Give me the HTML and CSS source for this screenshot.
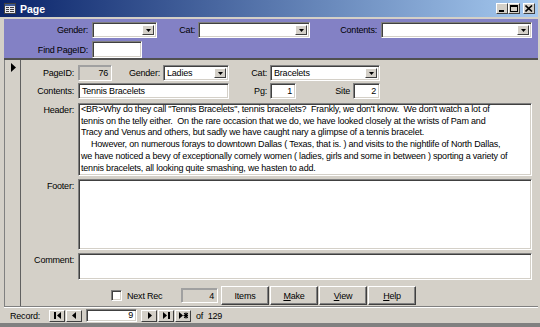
FILE: index.html
```html
<!DOCTYPE html>
<html lang="en">
  <head>
    <meta charset="UTF-8" />
    <title>Page</title>
    <link rel="stylesheet" href="styles.css">
  </head>
  <body>
    <div class="window">
      <!-- caption -->
      <div class="titlebar">
        <svg class="title-icon" width="12" height="11" viewBox="0 0 12 11">
          <rect x="0.5" y="0.5" width="11" height="10" fill="#e8e8f0" stroke="#404040"/>
          <rect x="1" y="1" width="10" height="2" fill="#3a5a9a"/>
          <rect x="2" y="4" width="3" height="1" fill="#404040"/>
          <rect x="6" y="4" width="4" height="1" fill="#404040"/>
          <rect x="2" y="6" width="3" height="1" fill="#404040"/>
          <rect x="6" y="6" width="4" height="1" fill="#404040"/>
          <rect x="2" y="8" width="3" height="1" fill="#404040"/>
          <rect x="6" y="8" width="4" height="1" fill="#404040"/>
        </svg>
        <span class="title-text">Page</span>
        <div class="caption-buttons">
          <span class="cap-btn">
            <svg width="8" height="7" viewBox="0 0 8 7"><rect x="1" y="5" width="5" height="2" fill="#000"/></svg>
          </span>
          <span class="cap-btn">
            <svg width="8" height="7" viewBox="0 0 8 7"><rect x="0.5" y="0.5" width="7" height="6" fill="none" stroke="#000"/><rect x="0" y="0" width="8" height="2" fill="#000"/></svg>
          </span>
          <span class="cap-btn cap-close">
            <svg width="8" height="7" viewBox="0 0 8 7"><path d="M0.5 0.5 L7 6.5 M7 0.5 L0.5 6.5" stroke="#000" stroke-width="1.6"/></svg>
          </span>
        </div>
      </div>

      <div class="form">
        <!-- form header: search controls -->
        <div class="form-header">
          <div class="row">
            <span class="lbl hl-gender">Gender:</span>
            <div class="combo hc-gender"><span class="combo-text"></span><span class="drop"><svg width="5" height="3" viewBox="0 0 5 3"><polygon points="0,0 5,0 2.5,3" fill="#000"/></svg></span></div>
            <span class="lbl hl-cat">Cat:</span>
            <div class="combo hc-cat"><span class="combo-text"></span><span class="drop"><svg width="5" height="3" viewBox="0 0 5 3"><polygon points="0,0 5,0 2.5,3" fill="#000"/></svg></span></div>
            <span class="lbl hl-contents">Contents:</span>
            <div class="combo hc-contents"><span class="combo-text"></span><span class="drop"><svg width="5" height="3" viewBox="0 0 5 3"><polygon points="0,0 5,0 2.5,3" fill="#000"/></svg></span></div>
          </div>
          <div class="row row-find">
            <span class="lbl hl-gender">Find PageID:</span>
            <div class="field hc-find"></div>
          </div>
        </div>

        <!-- detail section -->
        <div class="detail">
          <div class="selector">
            <svg class="current" width="5" height="9" viewBox="0 0 5 9"><polygon points="0,0 5,4.5 0,9" fill="#000"/></svg>
          </div>
          <div class="detail-body">
            <div class="row">
              <span class="lbl dl-first">PageID:</span>
              <div class="field field-locked dc-id">76</div>
              <span class="lbl dl-gender">Gender:</span>
              <div class="combo dc-gender"><span class="combo-text">Ladies</span><span class="drop"><svg width="5" height="3" viewBox="0 0 5 3"><polygon points="0,0 5,0 2.5,3" fill="#000"/></svg></span></div>
              <span class="lbl dl-cat">Cat:</span>
              <div class="combo dc-cat"><span class="combo-text">Bracelets</span><span class="drop"><svg width="5" height="3" viewBox="0 0 5 3"><polygon points="0,0 5,0 2.5,3" fill="#000"/></svg></span></div>
            </div>
            <div class="row row-2">
              <span class="lbl dl-first">Contents:</span>
              <div class="field dc-contents">Tennis Bracelets</div>
              <span class="lbl dl-cat">Pg:</span>
              <div class="field field-num dc-pg">1</div>
              <span class="lbl dl-site">Site</span>
              <div class="field field-num dc-site">2</div>
            </div>
            <div class="row row-memo row-header">
              <span class="lbl lbl-top dl-first">Header:</span>
              <div class="memo memo-header">
                <div class="memo-text">
                  <div>&lt;BR&gt;Why do they call "Tennis Bracelets", tennis bracelets?&nbsp; Frankly, we don't know.&nbsp; We don't watch a lot of</div>
                  <div>tennis on the telly either.&nbsp; On the rare occasion that we do, we have looked closely at the wrists of Pam and</div>
                  <div>Tracy and Venus and others, but sadly we have caught nary a glimpse of a tennis bracelet.</div>
                  <div class="indent">However, on numerous forays to downtown Dallas ( Texas, that is. ) and visits to the nightlife of North Dallas,</div>
                  <div>we have noticed a bevy of exceptionally comely women ( ladies, girls and some in between ) sporting a variety of</div>
                  <div>tennis bracelets, all looking quite smashing, we hasten to add.</div>
                  <div class="indent">After fortifying ourselves with a bit of liquid courage, we were emboldened to ask a few of them, since they</div>
                </div>
              </div>
            </div>
            <div class="row row-memo row-footer">
              <span class="lbl lbl-top dl-first">Footer:</span>
              <div class="memo memo-footer"></div>
            </div>
            <div class="row row-memo row-comment">
              <span class="lbl lbl-top dl-first">Comment:</span>
              <div class="memo memo-comment"></div>
            </div>
            <div class="row row-actions">
              <span class="checkbox"></span>
              <span class="check-label">Next Rec</span>
              <div class="field field-locked field-num dc-count">4</div>
              <button class="btn btn-items">Items</button>
              <button class="btn"><u>M</u>ake</button>
              <button class="btn"><u>V</u>iew</button>
              <button class="btn"><u>H</u>elp</button>
            </div>
          </div>
        </div>

        <!-- record navigation -->
        <div class="statusbar">
          <span class="rec-label">Record:</span>
          <span class="nav-btn nav-first"><svg width="7" height="7" viewBox="0 0 7 7"><rect x="0" y="0" width="2" height="7" fill="#000"/><polygon points="7,0 3,3.5 7,7" fill="#000"/></svg></span>
          <span class="nav-btn"><svg width="5" height="7" viewBox="0 0 5 7"><polygon points="4,0 0,3.5 4,7" fill="#000"/></svg></span>
          <div class="field field-num rec-input">9</div>
          <span class="nav-btn nav-next"><svg width="5" height="7" viewBox="0 0 5 7"><polygon points="1,0 5,3.5 1,7" fill="#000"/></svg></span>
          <span class="nav-btn"><svg width="7" height="7" viewBox="0 0 7 7"><polygon points="0,0 4,3.5 0,7" fill="#000"/><rect x="5" y="0" width="2" height="7" fill="#000"/></svg></span>
          <span class="nav-btn"><svg width="9" height="7" viewBox="0 0 9 7"><polygon points="0,0 4,3.5 0,7" fill="#000"/><path d="M7 0.5 V6.5 M4.5 3.5 H9 M5.2 1.2 L8.8 5.8 M8.8 1.2 L5.2 5.8" stroke="#000" stroke-width="1.1"/></svg></span>
          <span class="rec-of">of&nbsp; 129</span>
        </div>
      </div>
    </div>
  </body>
</html>
```

FILE: styles.css
```css
body {
  margin: 0;
  font-family: "Liberation Sans", Arial, sans-serif;
  font-size: 9px;
  letter-spacing: -0.2px;
  color: #000;
}

* {
  box-sizing: border-box;
}

.window {
  width: 540px;
  height: 327px;
  background-color: #d4d0c8;
  display: flex;
  flex-direction: column;
  border-bottom: 4px solid #808080;
  overflow: hidden;
}

/* caption */
.titlebar {
  height: 17px;
  margin-right: 2px;
  display: flex;
  align-items: center;
  background: linear-gradient(to right, #0a246a, #a6caf0);
  color: #fff;
}

.title-icon {
  margin-left: 4px;
}

.title-text {
  margin-left: 4px;
  font-weight: bold;
  font-size: 10.5px;
  letter-spacing: 0;
}

.caption-buttons {
  margin-left: auto;
  margin-right: 3px;
  display: flex;
}

.cap-btn {
  width: 12px;
  height: 11px;
  display: flex;
  align-items: center;
  justify-content: center;
  background-color: #d4d0c8;
  border: 1px solid;
  border-color: #fff #404040 #404040 #fff;
}

.cap-close {
  margin-left: 3px;
}

/* common controls */
.row {
  display: flex;
  align-items: center;
}

.lbl {
  flex: none;
  text-align: right;
  padding-right: 3px;
  white-space: nowrap;
}

.lbl-top {
  align-self: flex-start;
  padding-top: 2px;
}

.field,
.combo,
.memo,
.checkbox {
  flex: none;
  background-color: #fff;
  border: 1px solid;
  border-color: #808080 #fff #fff #808080;
  box-shadow: inset 1px 1px #404040, inset -1px -1px #d4d0c8;
}

.field {
  height: 16px;
  padding: 1px 3px 0 3px;
  line-height: 13px;
  white-space: nowrap;
  overflow: hidden;
}

.field-num {
  text-align: right;
}

.field-locked {
  background-color: #d4d0c8;
  box-shadow: inset 1px 1px #a0a0a0;
  border-color: #a0a0a0 #fff #fff #a0a0a0;
  text-align: right;
}

.combo {
  height: 16px;
  display: flex;
  align-items: stretch;
  padding: 2px;
}

.combo-text {
  flex: 1;
  padding-left: 1px;
  line-height: 11px;
  white-space: nowrap;
}

.drop {
  width: 12px;
  display: flex;
  align-items: center;
  justify-content: center;
  background-color: #d4d0c8;
  border: 1px solid;
  border-color: #fff #404040 #404040 #fff;
}

/* form header */
.form {
  flex: 1;
  margin: 2px 2px 0 4px;
  display: flex;
  flex-direction: column;
}

.form-header {
  height: 41px;
  padding-top: 3px;
  background-color: #8381c5;
  border-bottom: 2px solid #505050;
}

.row-find {
  margin-top: 3px;
}

.hl-gender {
  width: 88px;
  padding-right: 4px;
}

.hc-gender {
  width: 65px;
}

.hl-cat {
  width: 41px;
}

.hc-cat {
  width: 112px;
}

.hl-contents {
  width: 71px;
  padding-right: 4px;
}

.hc-contents {
  width: 151px;
}

.hc-find {
  width: 50px;
  height: 17px;
}

/* detail section */
.detail {
  flex: 1;
  display: flex;
  border-bottom: 1px solid #808080;
}

.selector {
  width: 17px;
  flex: none;
  border-left: 1px solid #808080;
  border-right: 1px solid #606060;
  padding: 3px 0 0 6px;
}

.detail-body {
  flex: 1;
  padding-top: 5px;
}

.dl-first {
  width: 57px;
  padding-right: 4px;
}

.dl-gender {
  width: 51px;
}

.dl-cat {
  width: 41px;
}

.dl-site {
  width: 57px;
}

.dc-id {
  width: 34px;
}

.dc-gender {
  width: 66px;
}

.dc-cat {
  width: 110px;
}

.dc-contents {
  width: 151px;
}

.dc-pg {
  width: 26px;
}

.dc-site {
  width: 27px;
}

.row-2 {
  margin-top: 2px;
}

.memo {
  width: 454px;
  overflow: hidden;
  padding: 0 2px;
  line-height: 11.7px;
  white-space: nowrap;
}

.indent {
  padding-left: 10px;
}

.row-header {
  margin-top: 4px;
}

.memo-header {
  height: 73px;
}

.row-footer {
  margin-top: 3px;
}

.memo-footer {
  height: 71px;
}

.row-comment {
  margin-top: 3px;
}

.memo-comment {
  height: 27px;
}

.row-actions {
  margin-top: 6px;
  height: 19px;
}

.checkbox {
  width: 11px;
  height: 11px;
  margin-left: 90px;
}

.check-label {
  width: 59px;
  padding-left: 5px;
}

.dc-count {
  width: 37px;
  height: 15px;
}

.btn {
  width: 48px;
  height: 19px;
  margin: 0 0 0 1px;
  padding: 0;
  font: inherit;
  letter-spacing: inherit;
  color: #000;
  background-color: #d4d0c8;
  border: 1px solid;
  border-color: #fff #404040 #404040 #fff;
  box-shadow: inset -1px -1px #808080;
}

.btn-items {
  margin-left: 3px;
}

/* record navigation */
.statusbar {
  height: 16px;
  display: flex;
  align-items: center;
  padding-left: 6px;
  border-top: 1px solid #fff;
}

.rec-label {
  width: 39px;
}

.nav-btn {
  width: 16px;
  height: 12px;
  display: flex;
  align-items: center;
  justify-content: center;
  background-color: #d4d0c8;
  border: 1px solid;
  border-color: #fff #404040 #404040 #fff;
  margin-left: 1px;
}

.nav-first {
  margin-left: 0;
}

.rec-input {
  width: 51px;
  height: 13px;
  line-height: 10px;
  padding-top: 0;
  margin: 0 3px 0 4px;
}

.rec-of {
  margin-left: 5px;
}
```
